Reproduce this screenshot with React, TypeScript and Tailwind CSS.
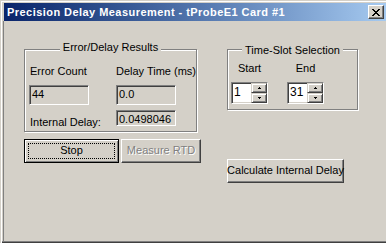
import React from 'react';

const ui = "font-['Liberation_Sans',Arial,sans-serif] text-[11px] leading-[14px] text-black";

const sunken = 'border border-t-[#808080] border-l-[#808080] border-b-white border-r-white';

const Field: React.FC<{ value: string; className?: string }> = ({ value, className = '' }) => (
  <div className={`${sunken} shadow-[inset_1px_1px_0_#404040] bg-[#d4d0c8] w-[60px] pl-[2px] pt-[1px] whitespace-nowrap overflow-hidden ${className}`}>
    {value}
  </div>
);

const Group: React.FC<{ title: string; titleTop: string; className?: string; children?: React.ReactNode }> = ({ title, titleTop, className = '', children }) => (
  <div className={`relative border border-[#808080] shadow-[inset_1px_1px_0_#fff,1px_1px_0_#fff] ${className}`}>
    <div className={`absolute left-0 right-0 flex justify-center ${titleTop}`}>
      <span className="bg-[#d4d0c8] px-[3px] whitespace-nowrap">{title}</span>
    </div>
    {children}
  </div>
);

const SpinBtn: React.FC<{ up?: boolean }> = ({ up }) => (
  <div className="flex-1 flex items-center justify-center bg-[#d4d0c8] border border-t-[#d4d0c8] border-l-[#d4d0c8] border-b-[#404040] border-r-[#404040] shadow-[inset_1px_1px_0_#fff,inset_-1px_-1px_0_#808080]">
    <svg width="3" height="2" viewBox="0 0 3 2" shapeRendering="crispEdges">
      {up ? (
        <>
          <rect x="1" y="0" width="1" height="1" fill="#000" />
          <rect x="0" y="1" width="3" height="1" fill="#000" />
        </>
      ) : (
        <>
          <rect x="0" y="0" width="3" height="1" fill="#000" />
          <rect x="1" y="1" width="1" height="1" fill="#000" />
        </>
      )}
    </svg>
  </div>
);

const Spin: React.FC<{ value: string; className?: string }> = ({ value, className = '' }) => (
  <div className={`w-[37px] h-[22px] flex bg-white ${sunken} shadow-[inset_1px_1px_0_#404040,inset_-1px_-1px_0_#d4d0c8] ${className}`}>
    <div className="flex-1 pl-[2px] pt-[2px] text-[12px]">{value}</div>
    <div className="w-[16px] flex flex-col">
      <SpinBtn up />
      <SpinBtn />
    </div>
  </div>
);

const Btn: React.FC<{ className?: string; disabled?: boolean; isDefault?: boolean; children: React.ReactNode }> = ({ className = '', disabled, isDefault, children }) => (
  <div
    className={`relative h-[24px] pb-[2px] flex items-center justify-center whitespace-nowrap bg-[#d4d0c8] ${
      isDefault
        ? 'border border-black shadow-[inset_1px_1px_0_#fff,inset_-1px_-1px_0_#808080]'
        : 'border border-t-white border-l-white border-b-[#404040] border-r-[#404040] shadow-[inset_-1px_-1px_0_#808080]'
    } ${disabled ? 'text-[#808080] [text-shadow:1px_1px_0_#fff]' : ''} ${className}`}
  >
    {isDefault && <div className="absolute inset-[3px] border border-dotted border-black" />}
    <span>{children}</span>
  </div>
);

const CloseX = () => {
  const rows: [number, number][][] = [
    [[0, 2], [6, 2]],
    [[1, 2], [5, 2]],
    [[2, 4]],
    [[3, 2]],
    [[2, 4]],
    [[1, 2], [5, 2]],
    [[0, 2], [6, 2]],
  ];
  return (
    <svg width="8" height="7" viewBox="0 0 8 7" shapeRendering="crispEdges">
      {rows.map((r, y) => r.map(([x, w], i) => <rect key={`${y}-${i}`} x={x} y={y} width={w} height={1} fill="#000" />))}
    </svg>
  );
};

export default function App() {
  return (
    <div className={`w-[386px] h-[243px] bg-[#d4d0c8] pt-[3px] pl-[3px] flex flex-col overflow-hidden shadow-[inset_1px_1px_0_#d4d0c8,inset_2px_2px_0_#fff,inset_0_-1px_0_#404040,inset_0_-2px_0_#808080] ${ui}`}>
      <div className="ml-[1px] h-[18px] shrink-0 flex items-center justify-between bg-linear-to-r from-[#0a246a] to-[#a6caf0] pl-[3px] pr-[2px]">
        <span className="text-white font-bold text-[11px] leading-[13px] tracking-[0.45px] whitespace-nowrap">
          Precision Delay Measurement - tProbeE1 Card #1
        </span>
        <div className="w-[16px] h-[14px] flex items-center justify-center bg-[#d4d0c8] border border-t-white border-l-white border-b-[#404040] border-r-[#404040] shadow-[inset_-1px_-1px_0_#808080]">
          <CloseX />
        </div>
      </div>

      <div className="flex-1 mb-[2px] border-l border-[#808080] flex pt-[28px]">
        <div className="ml-[20px] w-[203px] flex flex-col">
          <Group title="Error/Delay Results" titleTop="-top-[10px]" className="w-[173px] h-[83px] pl-[4px] pt-[14px]">
            <div className="flex pl-[1px]">
              <span className="w-[87px]">Error Count</span>
              <span className="whitespace-nowrap">Delay Time (ms)</span>
            </div>
            <div className="flex mt-[7px]">
              <div className="w-[87px]">
                <Field value="44" className="h-[20px]" />
              </div>
              <Field value="0.0" className="h-[20px]" />
            </div>
            <div className="flex mt-[5px]">
              <span className="w-[87px] pl-[1px] mt-[5px] whitespace-nowrap">Internal Delay:</span>
              <Field value="0.0498046" className="h-[16px]" />
            </div>
          </Group>
          <div className="flex gap-[2px] mt-[7px]">
            <Btn isDefault className="w-[95px]">Stop</Btn>
            <Btn disabled className="w-[80px]">Measure RTD</Btn>
          </div>
        </div>

        <div className="w-[131px] flex flex-col">
          <Group title="Time-Slot Selection" titleTop="-top-[7px]" className="w-[131px] h-[61px] pl-[3px] pt-[11px]">
            <div className="flex gap-[19px]">
              <div className="w-[37px] flex flex-col items-center">
                <span>Start</span>
                <Spin value="1" className="mt-[7px]" />
              </div>
              <div className="w-[37px] flex flex-col items-center">
                <span>End</span>
                <Spin value="31" className="mt-[7px]" />
              </div>
            </div>
          </Group>
          <Btn className="mt-[49px] w-[117px]">Calculate Internal Delay</Btn>
        </div>
      </div>
    </div>
  );
}
